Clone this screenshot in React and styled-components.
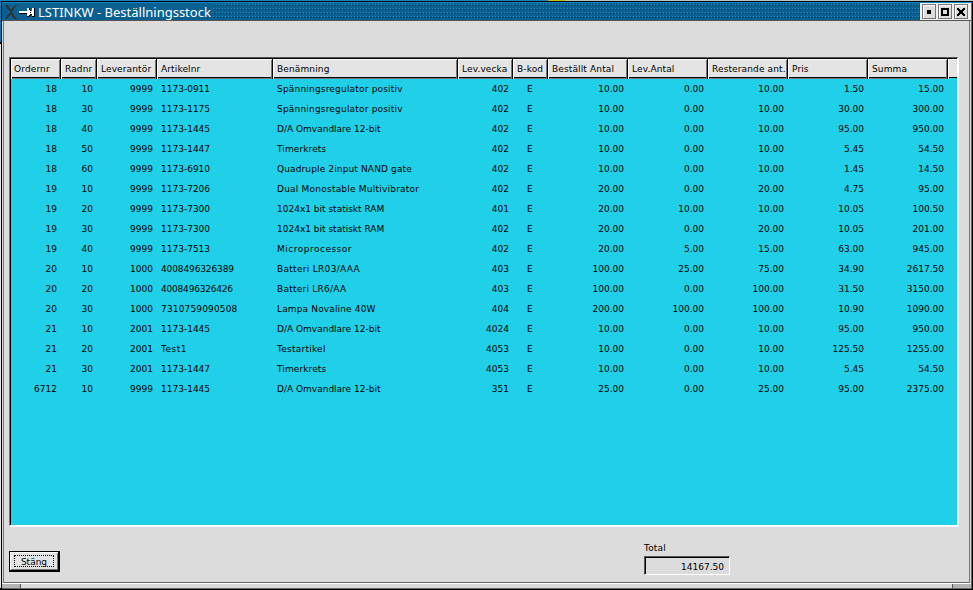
import React from "react";
import styled, { createGlobalStyle } from "styled-components";

const Global = createGlobalStyle`
  *{box-sizing:border-box}
  html,body{margin:0;overflow:hidden}
  body{width:973px;height:590px;background:#000;color:#000;font:9px/20px "DejaVu Sans",sans-serif}
`;
const Desktop = styled.div`
  width:973px;height:590px;padding:2px 1px 2px 1px;
  background:linear-gradient(90deg,#2480bc 0 548px,#c8c020 548px 565px,#b8c4c0 565px 100%) 0 0/100% 1px no-repeat,
  linear-gradient(#1874b0 0 42px,#000 42px 44px,#e8e8e8 44px 588px,#000 588px) 0 0/1px 100% no-repeat,#000;
`;
const Frame = styled.div`
  height:587px;width:971px;background:#dcdcdc;display:flex;flex-direction:column;
  border-left:1px solid #000;border-right:1px solid #666;
`;
const TitleBar = styled.header`
  height:19px;flex:none;display:flex;align-items:center;background:#0a6090;border-top:1px solid #1487c4;
  border-bottom:1px solid #555;color:#fff;
`;
const WindowIcon = styled.svg`display:block;flex:none;shape-rendering:crispEdges;`;
const Title = styled.h1`margin:0 0 0 3px;width:175px;font:13px/18px "Noto Sans",sans-serif;white-space:pre;`;
const Grip = styled.svg`flex:1;height:17px;display:block;`;
const Controls = styled.div`display:flex;gap:2px;padding:1px 2px 0 2px;background:#f0f0ee;width:51px;height:17px;`;
const Control = styled.button`
  width:14px;height:15px;padding:0;border:1px solid #777;background:#dcdcdc;
  display:block;box-shadow:inset 1px 1px #fff;
`;
const Body = styled.main`
  flex:1;margin:0 1px 0 1px;padding:36px 9px 0 5px;border-left:1px solid #777;border-right:1px solid #777;border-bottom:1px solid #666;
`;
const Table = styled.section`
  width:950px;height:470px;border-top:1px solid #555;border-left:1px solid #777;border-right:2px solid #fff;border-bottom:2px solid #fff;
  background:#1fd0e8;box-shadow:inset 1px 1px #000;padding:1px 0 0 1px;
`;
const columns = "50px 36px 60px 116px 185px 55px 35px 80px 80px 80px 80px 80px 9px";
const Head = styled.div`display:grid;grid-template-columns:${columns};height:19px;background:#e4e4e4;border-bottom:1px solid #000;`;
const HeadCell = styled.div`
  box-shadow:inset 1px 1px #fff,inset -1px -1px #777;padding-left:4px;white-space:nowrap;
  line-height:20px;letter-spacing:.13px;
  &:first-child{padding-left:3px;}
  &:not(:last-child){border-right:1px solid #000;}
  &:last-child{box-shadow:inset 1px 1px #fff;}
`;
const Row = styled.div`display:grid;grid-template-columns:${columns};height:20px;line-height:22px;`;
const Cell = styled.div`
  text-align:${p => p.$right ? "right" : "left"};padding:0 ${p => p.$right ? 4 : 0}px 0 ${p => p.$indent ?? 4}px;
  white-space:nowrap;letter-spacing:${p => p.$tracking || 0}px;
`;
const Footer = styled.footer`display:flex;height:55px;align-items:flex-start;`;
const Close = styled.button`
  width:51px;height:21px;margin:24px 584px 0 0;padding:2px;border:1px solid #000;border-right-width:2px;border-bottom-width:2px;background:#e4e4e4;
  box-shadow:inset 1px 1px #fff,inset -1px -1px #777;font:9px/11px "DejaVu Sans",sans-serif;color:#000;
`;
const Focus = styled.span`display:block;margin:1px 2px;height:12px;border:1px dotted #000;line-height:12px;`;
const Total = styled.label`display:block;width:86px;padding-top:13px;line-height:16px;letter-spacing:.2px;`;
const TotalField = styled.output`
  display:block;width:86px;height:19px;border:1px solid #555;border-right:1px solid #fff;border-bottom:1px solid #fff;
  box-shadow:inset 1px 1px #000;text-align:right;padding-right:5px;line-height:20px;letter-spacing:0;
`;
const Resize = styled.div`
  height:6px;margin:0;border-top:1px solid #fff;border-bottom:1px solid #666;display:grid;grid-template-columns:19px 1fr 19px;
`;
const Corner = styled.div`background:#b4b4b4;border-${p => p.$side}:1px solid #555;`;

const headings = ["Ordernr", "Radnr", "Leverantör", "Artikelnr", "Benämning", "Lev.vecka", "B-kod", "Beställt Antal", "Lev.Antal", "Resterande ant.", "Pris", "Summa", ""];
const rows = `18|10|9999|1173-0911|Spänningsregulator positiv|402|E|10.00|0.00|10.00|1.50|15.00
18|30|9999|1173-1175|Spänningsregulator positiv|402|E|10.00|0.00|10.00|30.00|300.00
18|40|9999|1173-1445|D/A Omvandlare 12-bit|402|E|10.00|0.00|10.00|95.00|950.00
18|50|9999|1173-1447|Timerkrets|402|E|10.00|0.00|10.00|5.45|54.50
18|60|9999|1173-6910|Quadruple 2input NAND gate|402|E|10.00|0.00|10.00|1.45|14.50
19|10|9999|1173-7206|Dual Monostable Multivibrator|402|E|20.00|0.00|20.00|4.75|95.00
19|20|9999|1173-7300|1024x1 bit statiskt RAM|401|E|20.00|10.00|10.00|10.05|100.50
19|30|9999|1173-7300|1024x1 bit statiskt RAM|402|E|20.00|0.00|20.00|10.05|201.00
19|40|9999|1173-7513|Microprocessor|402|E|20.00|5.00|15.00|63.00|945.00
20|10|1000|4008496326389|Batteri LR03/AAA|403|E|100.00|25.00|75.00|34.90|2617.50
20|20|1000|4008496326426|Batteri LR6/AA|403|E|100.00|0.00|100.00|31.50|3150.00
20|30|1000|7310759090508|Lampa Novaline 40W|404|E|200.00|100.00|100.00|10.90|1090.00
21|10|2001|1173-1445|D/A Omvandlare 12-bit|4024|E|10.00|0.00|10.00|95.00|950.00
21|20|2001|Test1|Testartikel|4053|E|10.00|0.00|10.00|125.50|1255.00
21|30|2001|1173-1447|Timerkrets|4053|E|10.00|0.00|10.00|5.45|54.50
6712|10|9999|1173-1445|D/A Omvandlare 12-bit|351|E|25.00|0.00|25.00|95.00|2375.00`.split("\n").map(r => r.split("|"));
const isRight = i => ![3, 4, 6].includes(i);
const tracking = {
  "Spänningsregulator positiv": .19,
  "Quadruple 2input NAND gate": .13,
  "Dual Monostable Multivibrator": .22,
  "Microprocessor": .5,
  "Lampa Novaline 40W": .15,
  "Batteri LR03/AAA": .3,
  "Batteri LR6/AA": .25,
  "Testartikel": .25,
  "Timerkrets": .1,
  "Test1": .5,
  "7310759090508": .15,
  "4008496326389": -.12,
  "4008496326426": -.2,
};

export default function App() {
  return <><Global /><Desktop><Frame>
    <TitleBar>
      <WindowIcon width="33" height="17"><path d="M3 2h3l3 5 4-5h2l-5 7 5 7h-3l-3-5-4 5H3l5-7z" fill="#333" /><path d="M17 8h8v2h-8zM25 5h2v8h-2zM27 7h1v1h2v-1h1v5h-1v-1h-2v1h-1zM30 5h2v8h-2z" fill="#fff" stroke="#000" strokeWidth="1" paintOrder="stroke" /><path d="M28 9h1v1h-1z" fill="#000" /></WindowIcon>
      <Title>LSTINKW - Beställningsstock</Title>
      <Grip><defs><pattern id="dots" width="3" height="4" patternUnits="userSpaceOnUse"><rect width="1" height="1" y="1" fill="#1d8cc4" /><rect width="1" height="1" x="1" y="2" fill="#04385c" /></pattern></defs><rect width="100%" height="100%" fill="url(#dots)" /></Grip>
      <Controls>
        <Control><WindowIcon width="12" height="13"><path d="M4 5h4v4H4z" /></WindowIcon></Control>
        <Control><WindowIcon width="12" height="13"><path d="M2 3h8v8H2zM4 5v4h4V5z" fillRule="evenodd" /></WindowIcon></Control>
        <Control><WindowIcon width="12" height="13"><path d="M2 3h2v1h1v1h2V4h1V3h2v2H9v1H8v2h1v1h1v2H8v-1H7V9H5v1H4v1H2V9h1V8h1V6H3V5H2z" /></WindowIcon></Control>
      </Controls>
    </TitleBar>
    <Body>
      <Table>
        <Head>{headings.map((h, i) => <HeadCell key={i}>{h}</HeadCell>)}</Head>
        {rows.map((r, ri) => <Row key={ri}>{r.map((c, i) => <Cell key={i} $right={isRight(i)} $indent={i === 6 ? 14 : 4} $tracking={tracking[c]}>{c}</Cell>)}</Row>)}
      </Table>
      <Footer><Close><Focus>Stäng</Focus></Close><Total>Total<TotalField>14167.50</TotalField></Total></Footer>
    </Body>
    <Resize><Corner $side="right" /><div /><Corner $side="left" /></Resize>
  </Frame></Desktop></>;
}
